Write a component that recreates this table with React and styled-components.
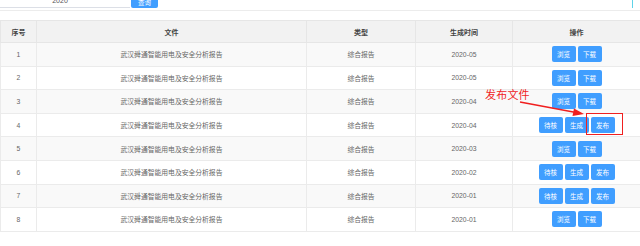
import React from 'react';
import styled, { createGlobalStyle } from 'styled-components';

const GlobalStyle = createGlobalStyle`
  html, body {
    margin: 0;
    padding: 0;
    background: #fff;
    font-family: "Liberation Sans", "Noto Sans CJK SC", sans-serif;
  }
`;

const Page = styled.div`
  position: relative;
  width: 640px;
  height: 246px;
  overflow: hidden;
`;

const TopBar = styled.div`
  height: 8px;
  display: flex;
  align-items: flex-end;
  overflow: hidden;
  position: relative;
`;

const InputBox = styled.div`
  width: 130px;
  height: 20px;
  box-sizing: border-box;
  border-bottom: 1px solid #dcdfe6;
  display: flex;
  align-items: flex-end;
  justify-content: center;
  padding-bottom: 3px;
  font-size: 7px;
  color: #555;
  padding-right: 10px;
`;

const SearchButton = styled.div`
  width: 27px;
  height: 20px;
  margin-left: 1px;
  background: #409eff;
  border-radius: 0 0 2px 2px;
  color: #fff;
  font-size: 6.5px;
  display: flex;
  align-items: flex-end;
  justify-content: center;
  padding-bottom: 1px;
  box-sizing: border-box;
`;

const Cursor = styled.div`
  position: absolute;
  right: 7px;
  top: 0;
  width: 1px;
  height: 9px;
  background: #5fd3e8;
`;

const Divider = styled.div`
  margin-top: 2px;
  height: 1px;
  background: #ececec;
`;

const Table = styled.table`
  margin-top: 9px;
  width: 640px;
  border-collapse: collapse;
  table-layout: fixed;
`;

const HeadCell = styled.th`
  height: 21px;
  padding: 0;
  background: #f2f2f2;
  border: 1px solid #e6e6e6;
  font-size: 7px;
  font-weight: bold;
  color: #444;
  text-align: center;
`;

const Row = styled.tr`
  background: ${(p) => (p.odd ? '#f9f9f9' : '#fff')};
`;

const Cell = styled.td`
  height: 22.6px;
  padding: 0;
  border: 1px solid #ebebeb;
  font-size: 6.8px;
  color: #666;
  text-align: center;
`;

const Actions = styled.div`
  display: flex;
  justify-content: center;
  gap: 2px;
`;

const ActionButton = styled.div`
  width: 24px;
  height: 16px;
  border-radius: 2px;
  background: #409eff;
  color: #fff;
  font-size: 6.5px;
  display: flex;
  align-items: center;
  justify-content: center;
`;

const Note = styled.div`
  position: absolute;
  left: 485px;
  top: 86px;
  font-size: 11px;
  color: #f01e1e;
  font-family: "Noto Sans CJK SC", sans-serif;
  letter-spacing: 0.2px;
`;

const Arrow = styled.svg`
  position: absolute;
  left: 0;
  top: 0;
  pointer-events: none;
`;

const Highlight = styled.div`
  position: absolute;
  left: 586px;
  top: 113px;
  width: 37px;
  height: 22px;
  box-sizing: border-box;
  border: 1px solid #f02020;
`;

const rows = [
  { no: 1, date: '2020-05', acts: ['浏览', '下载'] },
  { no: 2, date: '2020-05', acts: ['浏览', '下载'] },
  { no: 3, date: '2020-04', acts: ['浏览', '下载'] },
  { no: 4, date: '2020-04', acts: ['待核', '生成', '发布'] },
  { no: 5, date: '2020-03', acts: ['浏览', '下载'] },
  { no: 6, date: '2020-02', acts: ['待核', '生成', '发布'] },
  { no: 7, date: '2020-01', acts: ['待核', '生成', '发布'] },
  { no: 8, date: '2020-01', acts: ['浏览', '下载'] },
];

export default function App() {
  return (
    <Page>
      <GlobalStyle />
      <TopBar>
        <InputBox>2020</InputBox>
        <SearchButton>查询</SearchButton>
        <Cursor />
      </TopBar>
      <Divider />
      <Table>
        <colgroup>
          <col style={{ width: 36 }} />
          <col style={{ width: 270 }} />
          <col style={{ width: 109 }} />
          <col style={{ width: 97 }} />
          <col style={{ width: 128 }} />
        </colgroup>
        <thead>
          <tr>
            <HeadCell>序号</HeadCell>
            <HeadCell>文件</HeadCell>
            <HeadCell>类型</HeadCell>
            <HeadCell>生成时间</HeadCell>
            <HeadCell>操作</HeadCell>
          </tr>
        </thead>
        <tbody>
          {rows.map((r) => (
            <Row key={r.no} odd={r.no % 2 === 1}>
              <Cell>{r.no}</Cell>
              <Cell>武汉舜通智能用电及安全分析报告</Cell>
              <Cell>综合报告</Cell>
              <Cell>{r.date}</Cell>
              <Cell>
                <Actions>
                  {r.acts.map((a) => (
                    <ActionButton key={a}>{a}</ActionButton>
                  ))}
                </Actions>
              </Cell>
            </Row>
          ))}
        </tbody>
      </Table>
      <Note>发布文件</Note>
      <Arrow width="640" height="246" viewBox="0 0 640 246">
        <line x1="520" y1="102" x2="576" y2="112.5" stroke="#f01e1e" strokeWidth="1.6" />
        <polygon points="584,114 574,108.5 572.5,116" fill="#f01e1e" />
      </Arrow>
      <Highlight />
    </Page>
  );
}
